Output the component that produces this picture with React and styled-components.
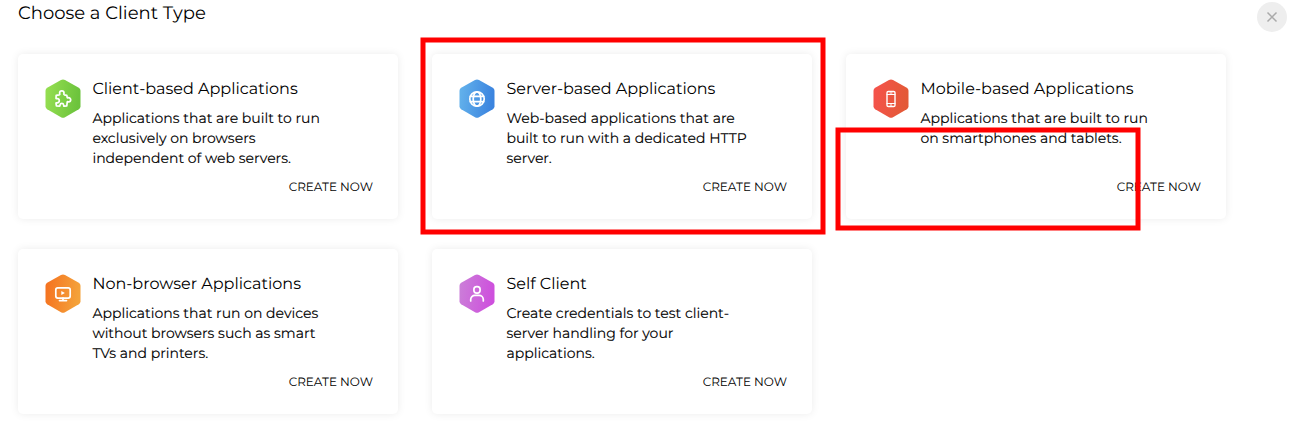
import React from "react";
import styled, { createGlobalStyle } from "styled-components";

const GlobalStyle = createGlobalStyle`
  * { box-sizing: border-box; }
  body {
    margin: 0;
    background: #fff;
    color: #000;
    font-family: Montserrat, Inter, "Liberation Sans", sans-serif;
    text-rendering: geometricPrecision;
  }
`;

const Page = styled.main`
  position: relative;
  width: 1301px;
  height: 435px;
  overflow: hidden;
  padding: 2px 14px 0 18px;
`;

const Header = styled.header`
  display: flex;
  justify-content: space-between;
  align-items: flex-start;
  height: 52px;
`;

const Title = styled.h1`
  margin: 0;
  font-size: 18px;
  line-height: 22px;
  font-weight: 400;
`;

const CloseButton = styled.button`
  display: flex;
  align-items: center;
  justify-content: center;
  width: 30px;
  height: 30px;
  padding: 0;
  border: 0;
  border-radius: 50%;
  background: #eee;
`;

const Grid = styled.section`
  display: grid;
  grid-template-columns: repeat(3, 380px);
  grid-auto-rows: 165px;
  gap: 30px 34px;
`;

const Card = styled.article`
  display: flex;
  gap: 11.4px;
  padding: 24px 25px 0 27px;
  border-radius: 5px;
  background: #fff;
  box-shadow: 0 0 8px rgba(0, 0, 0, 0.08);
`;

const Badge = styled.svg`
  flex: none;
  width: 36px;
  height: 40px;
  margin-top: 1px;
`;

const Body = styled.div`
  flex: 1;
  display: flex;
  flex-direction: column;
`;

const CardTitle = styled.h2`
  margin: 1px 0 7px;
  font-size: 16px;
  line-height: 22px;
  font-weight: 400;
  white-space: nowrap;
`;

const Description = styled.p`
  margin: 0;
  height: 60px;
  font-size: 14px;
  line-height: 20px;
  -webkit-text-stroke: 0.1px #000;
`;

const Line = styled.span`
  display: block;
  white-space: nowrap;
`;

const CreateLink = styled.a`
  align-self: flex-end;
  margin-top: 11px;
  font-size: 12px;
  line-height: 18px;
  color: #000;
`;

const Annotations = styled.svg`
  position: absolute;
  inset: 0;
  pointer-events: none;
`;

const glyphs = {
  puzzle: (
    <path d="M11.200 16.300L14.300 15.800C15.300 15.500 14.600 14.800 14.600 14A2.200 2.200 0 0 1 19 14C19 14.800 18.400 15.500 19.300 15.800L21.800 16.300L22.200 18.500C22.500 19.400 23 18.700 23.600 18.700A1.900 1.900 0 0 1 23.600 22.900C23 22.900 22.500 22.200 22.200 23.100L21.800 26.900L19.300 27.100C18.300 27.100 18.900 26.500 18.700 25.900A1.900 1.900 0 0 0 15 25.900C14.900 26.500 15.300 27.100 14.400 27.100L11.400 26.900L11 24.300C11 23.600 11.600 23.800 12.200 23.800A2.100 2.100 0 0 0 12.200 19.600C11.600 19.600 11 19.800 11 19.200Z" />
  ),
  globe: (
    <>
      <circle cx="18" cy="20" r="7.200" />
      <ellipse cx="18" cy="20" rx="3.800" ry="7.200" />
      <path d="M11.400 17.300h13.200M11.400 22.700h13.200" />
    </>
  ),
  phone: (
    <>
      <rect x="14" y="12.500" width="8" height="15" rx="1.300" strokeWidth="1.400" />
      <path d="M14 15.500h8M14 24.500h8M17 14h2M17.300 26h1.400" strokeWidth="1" />
    </>
  ),
  monitor: (
    <>
      <rect x="10.800" y="13.900" width="14.400" height="10.200" rx="2" />
      <path d="M18 24.100v2.300M14.500 26.600h7" />
      <path d="M16.300 16.900v4.200l3.600-2.100z" fill="#fff" stroke="none" />
    </>
  ),
  person: (
    <>
      <rect x="14.900" y="12.600" width="6.200" height="6.500" rx="2.800" />
      <path d="M11.700 27v-1.500a4.200 4.200 0 0 1 4.200-4.200h4.200a4.200 4.200 0 0 1 4.200 4.200V27" />
    </>
  ),
};

function HexIcon({ kind, from, to }) {
  return (
    <Badge viewBox="0 0 36 40">
      <defs>
        <linearGradient id={kind} x1="0" y1="0" x2="1" y2="0.150">
          <stop offset="0" stopColor={from} />
          <stop offset="1" stopColor={to} />
        </linearGradient>
      </defs>
      <path
        d="M16 1Q18 0 20 1L33.800 8.800Q35.500 9.800 35.500 11.800V27.200Q35.500 29.200 33.800 30.200L20 38.300Q18 39.300 16 38.300L2.200 30.200Q.5 29.200.5 27.200V11.800Q.5 9.800 2.200 8.800Z"
        fill={`url(#${kind})`}
      />
      <g fill="none" stroke="#fff" strokeWidth="1.700" strokeLinecap="round" strokeLinejoin="round">
        {glyphs[kind]}
      </g>
    </Badge>
  );
}

const clientTypes = [
  {
    kind: "puzzle", from: "#97e052", to: "#6cc33c",
    title: "Client-based Applications",
    lines: ["Applications that are built to run", "exclusively on browsers", "independent of web servers."],
  },
  {
    kind: "globe", from: "#65b4ec", to: "#3b84df",
    title: "Server-based Applications",
    lines: ["Web-based applications that are", "built to run with a dedicated HTTP", "server."],
  },
  {
    kind: "phone", from: "#f6524c", to: "#e35936",
    title: "Mobile-based Applications",
    lines: ["Applications that are built to run", "on smartphones and tablets."],
  },
  {
    kind: "monitor", from: "#f5701f", to: "#f4a23a",
    title: "Non-browser Applications",
    lines: ["Applications that run on devices", "without browsers such as smart", "TVs and printers."],
  },
  {
    kind: "person", from: "#cb80d8", to: "#ce50dd",
    title: "Self Client",
    lines: ["Create credentials to test client-", "server handling for your", "applications."],
  },
];

export default function App() {
  return (
    <Page>
      <GlobalStyle />
      <Header>
        <Title>Choose a Client Type</Title>
        <CloseButton aria-label="Close">
          <svg width="12" height="12" viewBox="0 0 12 12">
            <path d="M1.500 1.500l9 9M10.500 1.500l-9 9" stroke="#aaa" strokeWidth="1.500" />
          </svg>
        </CloseButton>
      </Header>
      <Grid>
        {clientTypes.map(({ kind, from, to, title, lines }) => (
          <Card key={kind}>
            <HexIcon kind={kind} from={from} to={to} />
            <Body>
              <CardTitle>{title}</CardTitle>
              <Description>
                {lines.map((text) => (
                  <Line key={text}>{text}</Line>
                ))}
              </Description>
              <CreateLink>CREATE NOW</CreateLink>
            </Body>
          </Card>
        ))}
      </Grid>
      <Annotations width="1301" height="435" fill="none" stroke="#f00" strokeWidth="5">
        <rect x="423" y="40" width="400" height="192" />
        <rect x="838" y="130" width="300" height="98" />
      </Annotations>
    </Page>
  );
}
